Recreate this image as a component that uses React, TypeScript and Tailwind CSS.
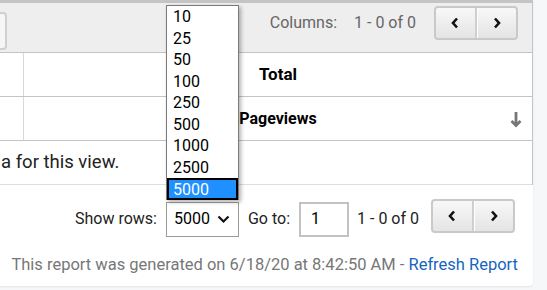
import React from "react";

const font = { fontFamily: "Roboto, 'Liberation Sans', Arial, sans-serif" };

function Chev({ dir }: { dir: "l" | "r" }) {
  return (
    <svg width="8" height="12" viewBox="0 0 8 12">
      {dir === "l" ? (
        <path d="M6 1.5 L2 6 L6 10.5" fill="none" stroke="#111" strokeWidth="2.6" strokeLinejoin="miter" />
      ) : (
        <path d="M2 1.5 L6 6 L2 10.5" fill="none" stroke="#111" strokeWidth="2.6" strokeLinejoin="miter" />
      )}
    </svg>
  );
}

function Pager({ cls }: { cls?: string }) {
  return (
    <div className={"flex h-[34px] w-[84px] rounded-[4px] border-2 border-[#c9c9c9] bg-gradient-to-b from-[#f8f8f8] to-[#e4e4e4] overflow-hidden " + (cls ?? "")}>
      <div className="flex flex-1 items-center justify-center border-r-2 border-[#cfcfcf]">
        <Chev dir="l" />
      </div>
      <div className="flex flex-1 items-center justify-center border-l border-white">
        <Chev dir="r" />
      </div>
    </div>
  );
}

const options = ["10", "25", "50", "100", "250", "500", "1000", "2500", "5000"];

export default function App() {
  return (
    <div className="relative w-[547px] h-[290px] overflow-hidden bg-[#f6f7f9]" style={font}>
      <div className="w-[533px] h-[286px] bg-white rounded-br-[4px] shadow-[0_1px_2px_rgba(0,0,0,0.08)] flex flex-col">
        <div className="border-t-[3px] border-t-[#c4c4c4] border-r border-r-[#c4c4c4] flex flex-col">
          <div className="h-[50px] bg-[#eeeeee] border-b border-[#c4c4c4] flex items-center justify-between pr-[14px]">
            <div className="ml-[-20px] w-[27px] h-[38px] mt-[6px] rounded-[4px] border-2 border-[#d0d0d0] bg-[#f6f6f6]" />
            <div className="flex items-center text-[16px] text-[#666] mb-[10px]">
              <span>Columns:</span>
              <span className="ml-[17px] mr-[18px]">1 - 0 of 0</span>
              <Pager />
            </div>
          </div>
          <div className="h-[44px] border-b border-[#c4c4c4] flex">
            <div className="w-[24px] border-r border-[#d8d8d8]" />
            <div className="flex-1 flex items-center justify-center font-bold text-[17px] text-black">Total</div>
          </div>
          <div className="h-[44px] border-b border-[#c4c4c4] flex">
            <div className="w-[24px] border-r border-[#d8d8d8]" />
            <div className="flex-1 relative flex items-center justify-center font-bold text-[16px] text-black">
              Pageviews
              <svg className="absolute right-[10px] top-[14px]" width="12" height="17" viewBox="0 0 12 17">
                <path d="M6 1 V14.5 M1.5 10 L6 14.5 L10.5 10" fill="none" stroke="#777" strokeWidth="2.8" />
              </svg>
            </div>
          </div>
          <div className="h-[44px] border-b border-[#dddddd] flex items-center text-[18.5px] text-[#222]">
            <span className="ml-[1px]">a for this view.</span>
          </div>
        </div>
        <div className="flex items-center justify-end pr-[18px] pt-[14px] text-[16px] text-[#222]">
          <span>Show rows:</span>
          <div className="ml-[9px] w-[73px] h-[35px] border border-[#9a9a9a] flex items-center justify-between pl-[7px] pr-[8px] text-[16px] text-black">
            <span>5000</span>
            <svg width="13" height="9" viewBox="0 0 13 9">
              <path d="M1.5 1.5 L6.5 6.5 L11.5 1.5" fill="none" stroke="#111" strokeWidth="2.2" />
            </svg>
          </div>
          <span className="ml-[9px]">Go to:</span>
          <div className="ml-[9px] w-[50px] h-[35px] border-2 border-[#c2c2c2] flex items-center pl-[10px] text-[16px] text-black">1</div>
          <span className="ml-[8px] mr-[12px] text-[16px]">1 - 0 of 0</span>
          <Pager cls="mb-[6px]" />
        </div>
        <div className="flex justify-end pr-[15px] mt-[14px] text-[16.5px] text-[#777]">
          <span>
            This report was generated on 6/18/20 at 8:42:50 AM - <span className="text-[#1565c0]">Refresh Report</span>
          </span>
        </div>
      </div>

      <div className="absolute left-[166px] top-[5px] w-[73px] h-[195px] bg-white border border-[#7a7a7a] shadow-[2px_2px_4px_rgba(0,0,0,0.3)] flex flex-col text-[16px] text-black">
        {options.map((o) => (
          <div
            key={o}
            className={
              o === "5000"
                ? "h-[21.5px] leading-[19px] pl-[4px] bg-[#1e90ff] text-white border-2 border-black"
                : "h-[21.5px] leading-[21.5px] pl-[6px]"
            }
          >
            {o}
          </div>
        ))}
      </div>
    </div>
  );
}
